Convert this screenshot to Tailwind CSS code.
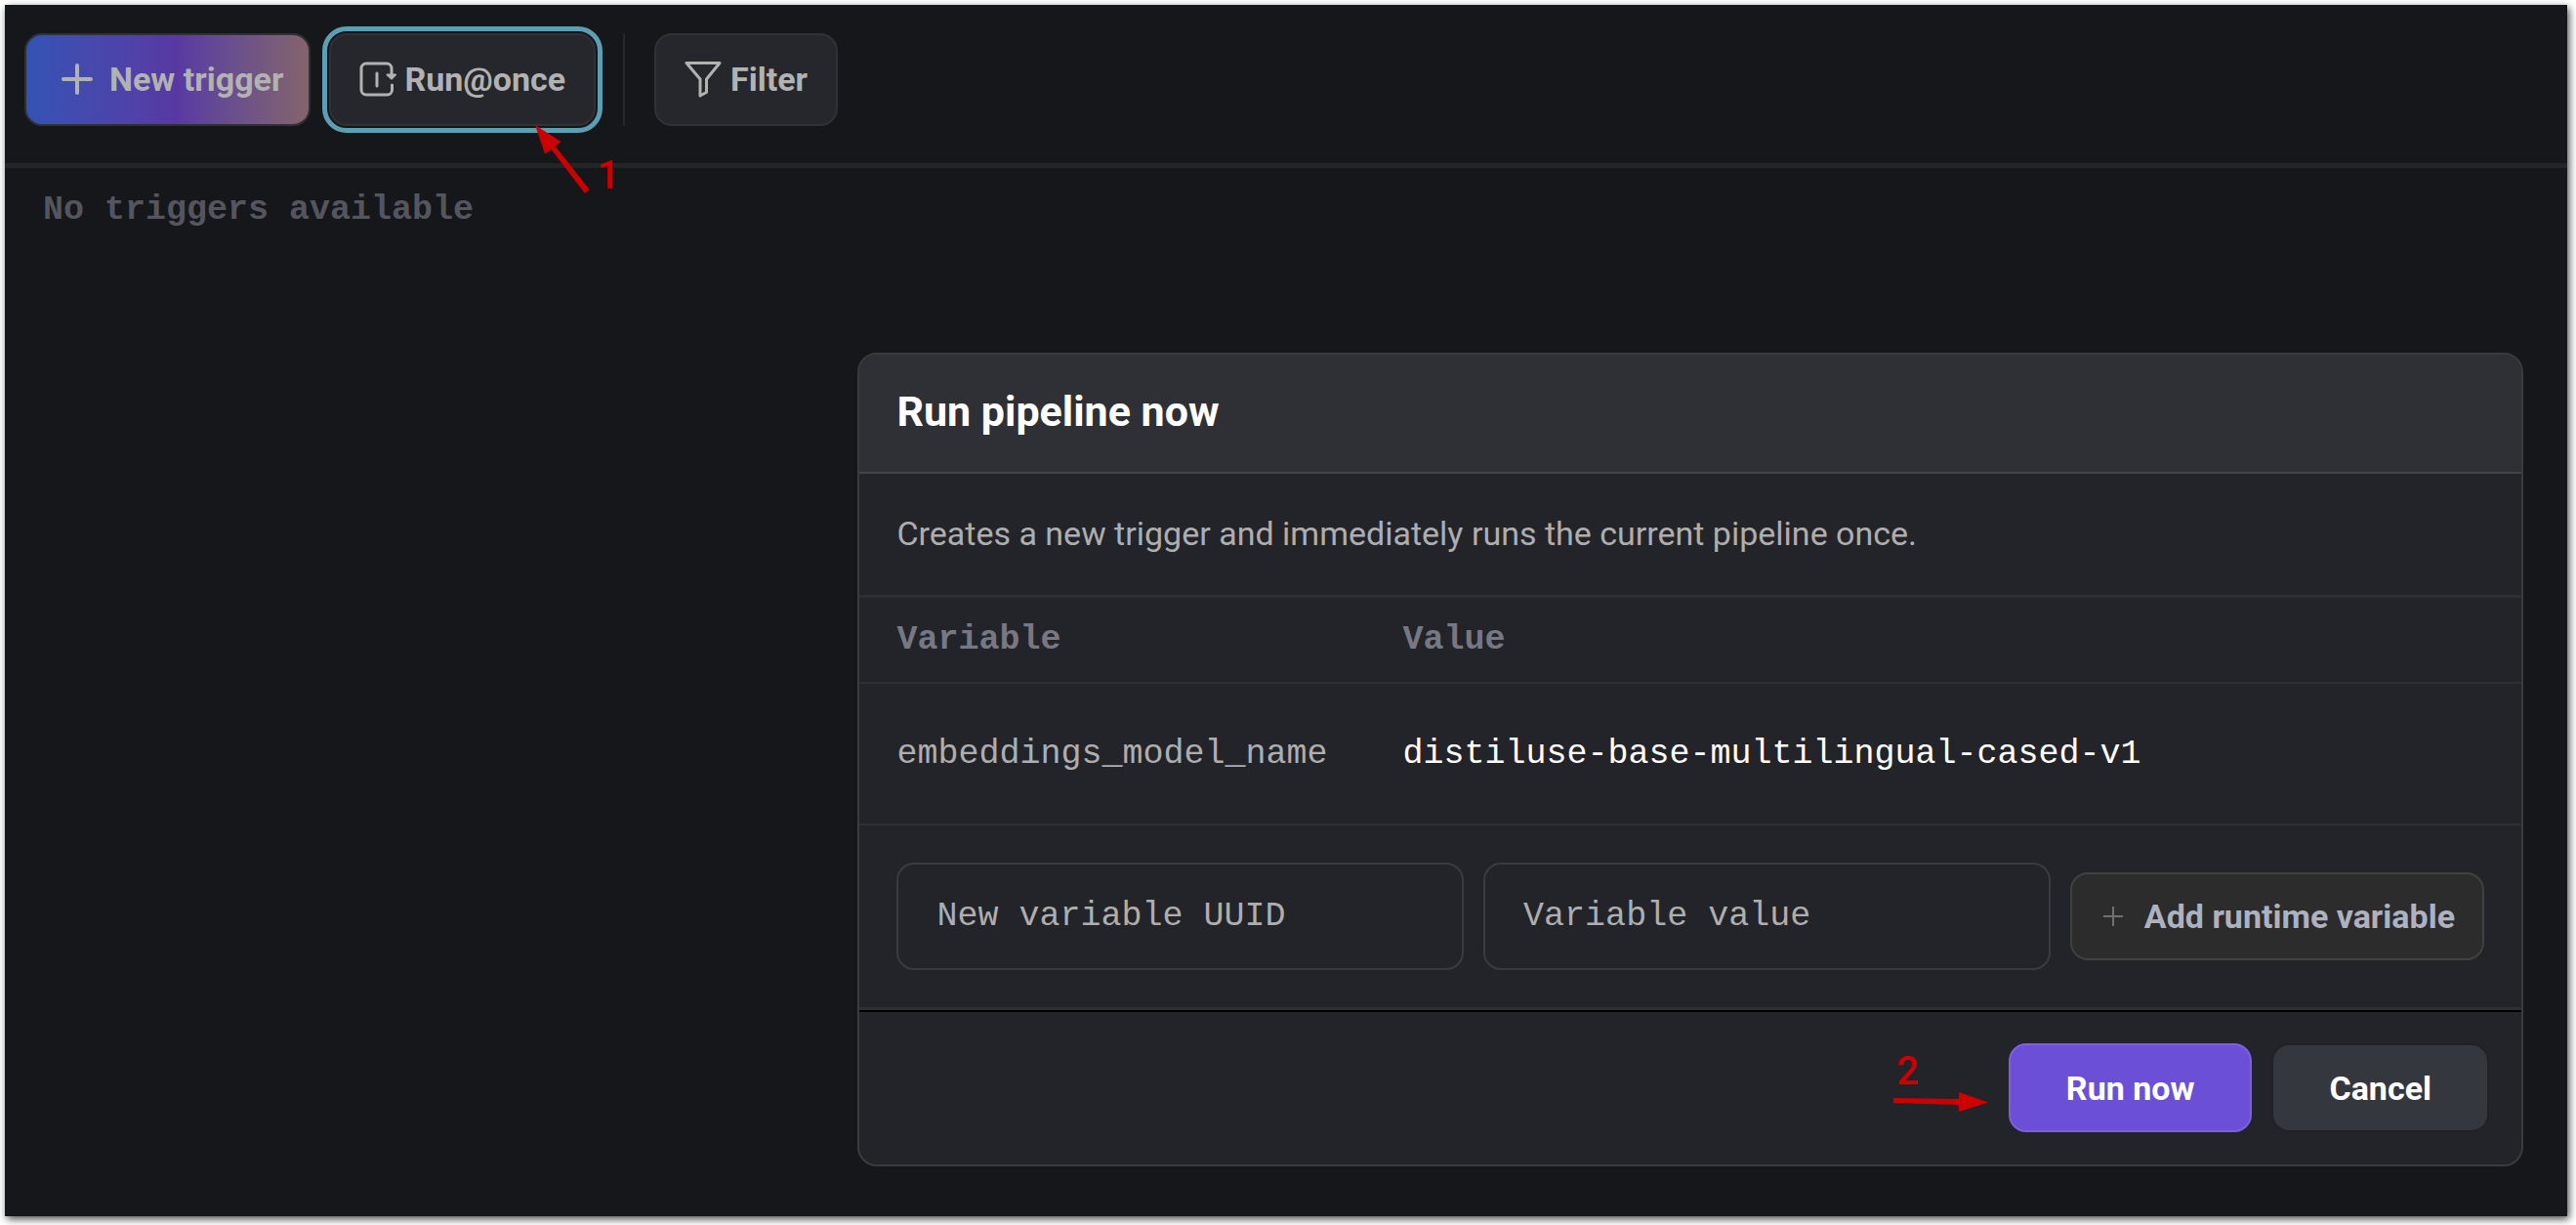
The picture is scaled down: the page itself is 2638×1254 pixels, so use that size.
<!DOCTYPE html>
<html lang="en">
<head>
<meta charset="utf-8">
<title>Triggers</title>
<script src="https://cdn.jsdelivr.net/npm/@tailwindcss/browser@4"></script>
</head>
<body class="flex min-h-screen flex-col bg-white pt-[5px] pr-[9px] pb-[9px] pl-[5px] font-[Roboto,sans-serif] text-[34px]/[40px]">
<div class="flex grow flex-col bg-[#16171a] shadow-[2px_3px_8px_rgba(0,0,0,0.7)]">

  <header class="flex h-[167px] items-start border-b-[5px] border-[#232527] px-5 pt-[29px] font-bold text-[#b2b2b2]">
    <button type="button" class="flex h-[95px] items-center gap-4 rounded-[18px] border-2 border-[#303136] bg-linear-to-r from-[#3253b4] via-[#5839a3] via-53% to-[#85636a] pr-[26px] pb-px pl-[35px]">
      <svg class="size-[34px]" viewBox="0 0 34 34" fill="none" stroke="currentColor" stroke-width="4" stroke-linecap="round" aria-hidden="true"><path d="M17 3v28M3 17h28"/></svg>
      New trigger
    </button>
    <div class="relative ml-[19px]">
      <button type="button" class="flex h-[95px] items-center gap-2 rounded-[18px] border-2 border-[#303136] bg-[#26272c] pr-[29px] pb-px pl-[29px] outline-[5px] outline-offset-2 outline-[#5c9fb5]">
        <svg class="h-[36px] w-[38px]" viewBox="0 0 38 36" fill="none" stroke="currentColor" stroke-width="3" stroke-linecap="round" aria-hidden="true"><path d="M33.500 24V29a5 5 0 0 1-5 5H7a5 5 0 0 1-5-5V7a5 5 0 0 1 5-5h21a5 5 0 0 1 5 5v8"/><path d="M18 12v13"/><path d="M28.500 13.500l4.500 4 4-4z" fill="currentColor" stroke-width="2" stroke-linejoin="round"/></svg>
        Run@once
      </button>
      <svg class="absolute top-[94px] left-[211px] h-[72px] w-[58px]" viewBox="0 0 58 72" fill="#cc0000" aria-hidden="true"><path d="M0 0l26.500 17-6 4.500L55.500 66l-4.500 4L16.500 25l-6.500 4.500z"/></svg>
      <span class="absolute top-[122px] left-[274px] font-medium text-[#cc0000] text-[40px]/[48px]">1</span>
    </div>
    <div class="ml-7 h-[95px] w-[2px] bg-[#26272b]"></div>
    <button type="button" class="ml-[30px] flex h-[95px] items-center gap-[9px] rounded-[18px] border-2 border-[#303136] bg-[#26272c] px-[29px] pb-px">
      <svg class="h-[38px] w-[38px]" viewBox="0 0 38 38" fill="none" stroke="currentColor" stroke-width="3" stroke-linejoin="round" aria-hidden="true"><path d="M2 2.500h34L22.500 19v13.500L16 36V19z"/></svg>
      Filter
    </button>
  </header>

  <p class="px-[39px] pt-[23px] font-['Liberation_Mono',monospace] text-[35px]/[40px] font-bold text-[#55555f]">No triggers available</p>

  <section role="dialog" aria-labelledby="dialog-title" class="mt-[126px] mr-[45px] mb-10 ml-auto w-[65%] rounded-[20px] border-2 border-[#3a3b3f] bg-[#232429]">
    <h1 id="dialog-title" class="rounded-t-[18px] border-b-2 border-[#434449] bg-[#2f3035] px-[38px] pt-[34px] pb-[38px] text-[43px]/[48px] font-bold text-white">Run pipeline now</h1>
    <p class="border-b-3 border-[#2e2f33] px-[38px] pt-[41px] pb-[43px] text-[#aeaeae]">Creates a new trigger and immediately runs the current pipeline once.</p>
    <table class="w-full table-fixed text-left font-['Liberation_Mono',monospace] text-[35px]/[40px]">
      <thead>
        <tr class="h-[87px] border-b-2 border-[#2e2f33] text-[#777883]">
          <th scope="col" class="w-[518px] pl-[38px] font-bold">Variable</th>
          <th scope="col" class="pl-[38px] font-bold">Value</th>
        </tr>
      </thead>
      <tbody>
        <tr class="h-[145px] border-b-2 border-[#2e2f33]">
          <td class="pl-[38px] text-[#aeaeae]">embeddings_model_name</td>
          <td class="pl-[38px] text-white">distiluse-base-multilingual-cased-v1</td>
        </tr>
      </tbody>
    </table>
    <form class="flex items-center gap-5 border-b-3 border-[#2e2f33] p-[38px]">
      <input type="text" aria-label="New variable UUID" placeholder="New variable UUID" class="h-[110px] min-w-0 flex-1 rounded-[18px] border-2 border-[#3a3b3f] px-[39px] font-['Liberation_Mono',monospace] text-[35px]/[40px] text-white placeholder:text-[#aeaeae]">
      <input type="text" aria-label="Variable value" placeholder="Variable value" class="h-[110px] min-w-0 flex-1 rounded-[18px] border-2 border-[#3a3b3f] px-[39px] font-['Liberation_Mono',monospace] text-[35px]/[40px] text-white placeholder:text-[#aeaeae]">
      <button type="button" class="flex h-[90px] items-center gap-[22px] rounded-[18px] border-2 border-[#41413f] bg-[#2c2c2c] pr-[28px] pl-[32px] font-bold text-[#adb2c1]">
        <svg class="size-5" viewBox="0 0 20 20" fill="none" stroke="#707070" stroke-width="2" aria-hidden="true"><path d="M10 0v20M0 10h20"/></svg>
        Add runtime variable
      </button>
    </form>
    <footer class="relative flex justify-end gap-5 border-t-2 border-black px-[33px] pt-[32px] pb-[33px] font-bold text-white">
      <svg class="mt-[50px] h-[20px] w-[98px]" viewBox="0 0 98 20" fill="#cc0000" aria-hidden="true"><path d="M0 6l67 1V0l30 10.500L67 20v-7L0 11z"/></svg>
      <span class="absolute right-[617px] bottom-[71px] font-medium text-[#cc0000] text-[40px]/[48px]">2</span>
      <button type="button" class="h-[91px] rounded-[18px] border-2 border-[#7b61dc] bg-[#6b50d7] px-[57px]">Run now</button>
      <button type="button" class="h-[91px] rounded-[18px] border-2 border-[#202125] bg-[#35373f] px-[57px]">Cancel</button>
    </footer>
  </section>
</div>
</body>
</html>
